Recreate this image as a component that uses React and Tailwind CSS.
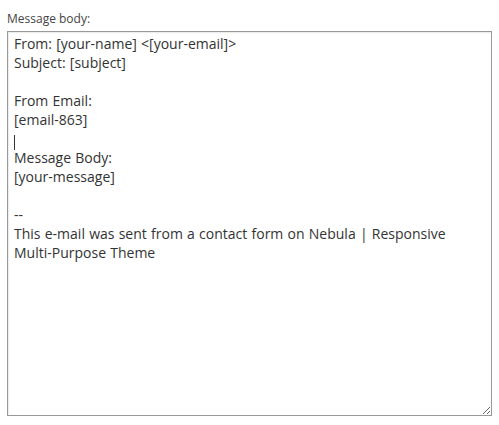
import React from "react";

const body = `From: [your-name] <[your-email]>
Subject: [subject]

From Email:
[email-863]

Message Body:
[your-message]

--
This e-mail was sent from a contact form on Nebula | Responsive Multi-Purpose Theme`;

export default function App() {
  return (
    <div className="w-[499px] h-[425px] bg-white pl-[7px] pt-[10px]" style={{ fontFamily: '"Open Sans", sans-serif' }}>
      <div className="text-[12px] leading-[17px] text-[#444]">Message body:</div>
      <div className="relative mt-[4px] w-[485px] h-[385px]">
        <textarea
          readOnly
          defaultValue={body}
          className="block w-full h-full border border-[#999] bg-white pl-[6px] pr-[8px] py-[2px] text-[14px] leading-[19px] text-[#333] [word-spacing:0.6px] outline-none resize shadow-[inset_1px_1px_1px_rgba(0,0,0,0.08)]"
          style={{ fontFamily: '"Open Sans", sans-serif' }}
        />
        <span className="absolute left-[7px] top-[104px] w-px h-[15px] bg-[#333]" />
      </div>
    </div>
  );
}
